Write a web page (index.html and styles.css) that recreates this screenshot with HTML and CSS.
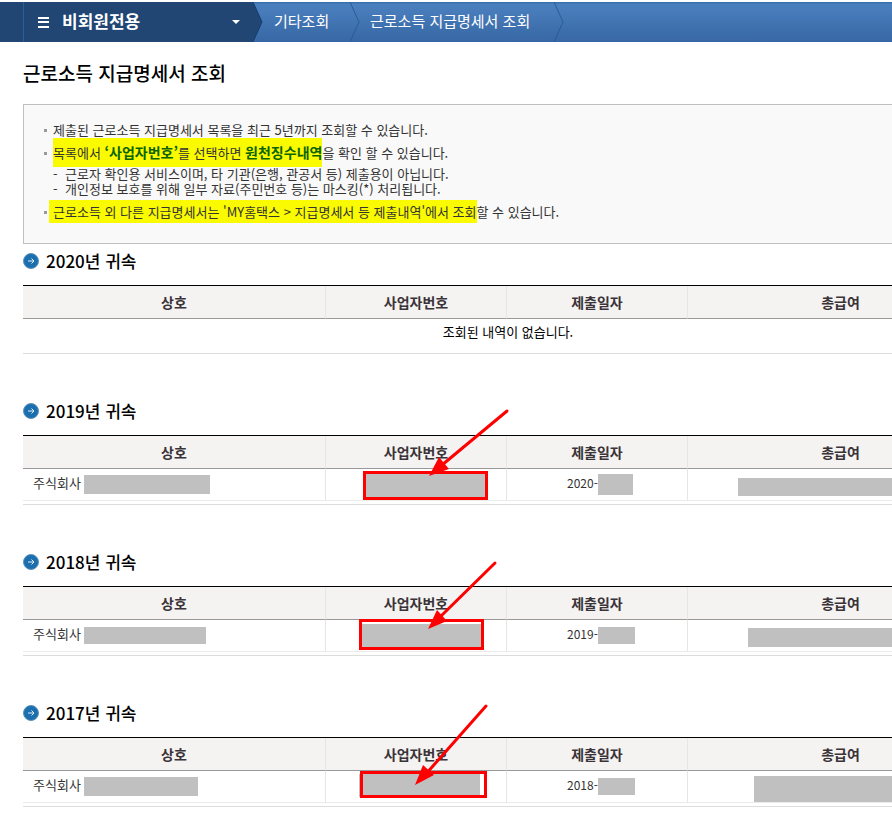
FILE: index.html
```html
<!DOCTYPE html>
<html lang="ko">
<head>
<meta charset="utf-8">
<meta name="viewport" content="width=device-width, initial-scale=1">
<title>근로소득 지급명세서 조회</title>
<link rel="stylesheet" href="styles.css">
</head>
<body>
<nav class="topbar">
  <button class="menu" type="button">
    <svg class="menu-bars" width="11" height="11" viewBox="0 0 11 11" aria-hidden="true"><path d="M0 0h11v2H0zM0 4h11v2H0zM0 9h11v2H0z" fill="#fff"/></svg>
    <span class="menu-label">비회원전용</span>
    <svg class="menu-caret" width="8" height="4" viewBox="0 0 8 4" aria-hidden="true"><path d="M0 0h8L4 4z" fill="#fff"/></svg>
  </button>
  <svg class="chevron" width="10" height="40" viewBox="0 0 10 40" aria-hidden="true"><path d="M0 0L9 20L0 40z" fill="#214674"/><path d="M0 0L9 20L0 40" fill="none" stroke="#123f6e"/></svg>
  <a class="crumb crumb-group" href="#">기타조회</a>
  <svg class="chevron" width="10" height="40" viewBox="0 0 10 40" aria-hidden="true"><path d="M0 0L9 20L0 40" fill="none" stroke="#255e96"/></svg>
  <a class="crumb crumb-page" href="#">근로소득 지급명세서 조회</a>
  <svg class="chevron" width="10" height="40" viewBox="0 0 10 40" aria-hidden="true"><path d="M0 0L9 20L0 40" fill="none" stroke="#255e96"/></svg>
</nav>

<main class="content">
  <h1 class="title">근로소득 지급명세서 조회</h1>

  <ul class="notice">
    <li>제출된 근로소득 지급명세서 목록을 최근 5년까지 조회할 수 있습니다.</li>
    <li><mark class="hl hl-tall">목록에서 <strong>‘사업자번호’</strong>를 선택하면 <strong>원천징수내역</strong></mark>을 확인 할 수 있습니다.
      <ul class="sub">
        <li>근로자 확인용 서비스이며, 타 기관(은행, 관공서 등) 제출용이 아닙니다.</li>
        <li>개인정보 보호를 위해 일부 자료(주민번호 등)는 마스킹(*) 처리됩니다.</li>
      </ul>
    </li>
    <li><mark class="hl hl-wide">근로소득 외 다른 지급명세서는 'MY홈택스 &gt; 지급명세서 등 제출내역'에서 조회</mark>할 수 있습니다.</li>
  </ul>

  <section class="year">
    <h2><svg width="16" height="16" viewBox="0 0 16 16" aria-hidden="true"><circle cx="8" cy="8" r="7.5" fill="#1b6fae" stroke="#5d93b8"/><path d="M5 8h6M8.500 5.500L11 8L8.500 10.500" fill="none" stroke="#e4eff7"/></svg>2020년 귀속</h2>
    <div class="grid grid-empty">
      <table>
        <colgroup><col class="c-name"><col class="c-num"><col class="c-date"><col></colgroup>
        <thead><tr><th>상호</th><th>사업자번호</th><th>제출일자</th><th>총급여</th></tr></thead>
        <tbody><tr><td class="empty" colspan="4">조회된 내역이 없습니다.</td></tr></tbody>
      </table>
    </div>
  </section>

  <section class="year">
    <h2><svg width="16" height="16" viewBox="0 0 16 16" aria-hidden="true"><circle cx="8" cy="8" r="7.5" fill="#1b6fae" stroke="#5d93b8"/><path d="M5 8h6M8.500 5.500L11 8L8.500 10.500" fill="none" stroke="#e4eff7"/></svg>2019년 귀속</h2>
    <div class="grid">
      <table>
        <colgroup><col class="c-name"><col class="c-num"><col class="c-date"><col></colgroup>
        <thead><tr><th>상호</th><th>사업자번호</th><th>제출일자</th><th>총급여</th></tr></thead>
        <tbody><tr>
          <td><div class="cell name"><span class="label">주식회사</span><span class="mask name-2019"></span></div></td>
          <td class="num"><svg class="note" width="181" height="102" viewBox="0 0 181 102" aria-hidden="true"><rect x="40" y="75" width="121" height="23" fill="#c0c0c0"/><rect x="38.500" y="73.500" width="122" height="26" fill="none" stroke="#f00" stroke-width="3"/><path d="M181 12L116 66" stroke="#f00" stroke-width="3" stroke-linecap="round"/><path d="M103 77L113 58L123 70z" fill="#f00"/></svg></td>
          <td><div class="cell date"><span class="label">2020-</span><span class="mask date-2019"></span></div></td>
          <td><div class="cell total"><span class="mask total-2019"></span></div></td>
        </tr></tbody>
      </table>
    </div>
  </section>

  <section class="year">
    <h2><svg width="16" height="16" viewBox="0 0 16 16" aria-hidden="true"><circle cx="8" cy="8" r="7.5" fill="#1b6fae" stroke="#5d93b8"/><path d="M5 8h6M8.500 5.500L11 8L8.500 10.500" fill="none" stroke="#e4eff7"/></svg>2018년 귀속</h2>
    <div class="grid">
      <table>
        <colgroup><col class="c-name"><col class="c-num"><col class="c-date"><col></colgroup>
        <thead><tr><th>상호</th><th>사업자번호</th><th>제출일자</th><th>총급여</th></tr></thead>
        <tbody><tr>
          <td><div class="cell name"><span class="label">주식회사</span><span class="mask name-2018"></span></div></td>
          <td class="num"><svg class="note" width="181" height="102" viewBox="0 0 181 102" aria-hidden="true"><rect x="36" y="74" width="120" height="23" fill="#c0c0c0"/><rect x="34.500" y="70.500" width="122" height="28" fill="none" stroke="#f00" stroke-width="3"/><path d="M169 13L114 67" stroke="#f00" stroke-width="3" stroke-linecap="round"/><path d="M102 79L111 60L121 71z" fill="#f00"/></svg></td>
          <td><div class="cell date"><span class="label">2019-</span><span class="mask date-2018"></span></div></td>
          <td><div class="cell total"><span class="mask total-2018"></span></div></td>
        </tr></tbody>
      </table>
    </div>
  </section>

  <section class="year">
    <h2><svg width="16" height="16" viewBox="0 0 16 16" aria-hidden="true"><circle cx="8" cy="8" r="7.5" fill="#1b6fae" stroke="#5d93b8"/><path d="M5 8h6M8.500 5.500L11 8L8.500 10.500" fill="none" stroke="#e4eff7"/></svg>2017년 귀속</h2>
    <div class="grid">
      <table>
        <colgroup><col class="c-name"><col class="c-num"><col class="c-date"><col></colgroup>
        <thead><tr><th>상호</th><th>사업자번호</th><th>제출일자</th><th>총급여</th></tr></thead>
        <tbody><tr>
          <td><div class="cell name"><span class="label">주식회사</span><span class="mask name-2017"></span></div></td>
          <td class="num"><svg class="note" width="181" height="102" viewBox="0 0 181 102" aria-hidden="true"><rect x="33" y="73" width="121" height="23" fill="#c0c0c0"/><rect x="35.500" y="71.500" width="124" height="24" fill="none" stroke="#f00" stroke-width="3"/><path d="M160 5L99 74" stroke="#f00" stroke-width="3" stroke-linecap="round"/><path d="M89 84L97 64L108 74z" fill="#f00"/></svg></td>
          <td><div class="cell date"><span class="label">2018-</span><span class="mask date-2017"></span></div></td>
          <td><div class="cell total"><span class="mask total-2017"></span></div></td>
        </tr></tbody>
      </table>
    </div>
  </section>
</main>
</body>
</html>
```
FILE: styles.css
```css
* { box-sizing: border-box; }

body {
  margin: 0;
  padding-top: 2px;
  background: #fff;
  color: #333;
  font: 13px/15px "Noto Sans CJK KR", "Noto Sans", sans-serif;
}

ul { margin: 0; padding: 0; list-style: none; }

.topbar {
  display: flex;
  height: 40px;
  overflow: hidden;
  background: linear-gradient(#3a70ad 0, #3a70ad 1px, #4b80be 2px, #3867a5 100%);
}

.menu {
  display: flex;
  flex: none;
  align-items: center;
  width: 253px;
  padding: 0 13px 0 38px;
  border: 0;
  background: linear-gradient(to right, transparent 23px, #2c5f96 23px, #2c5f96 24px, transparent 24px) #214674;
  color: #fff;
  font: bold 17px/20px "Noto Sans CJK KR", sans-serif;
}

.menu-label { margin-left: 13px; padding-bottom: 2px; }
.menu-caret { margin-left: auto; }
.chevron { flex: none; }

.crumb {
  flex: none;
  color: #fff;
  font-size: 15px;
  line-height: 37px;
  text-decoration: none;
  white-space: nowrap;
}

.crumb-group { width: 87px; padding-left: 11px; }
.crumb-page { width: 194px; padding-left: 10px; }

.content { padding-left: 23px; overflow: hidden; }

.title {
  margin: 0;
  color: #000;
  font-size: 19px;
  font-weight: 500;
  line-height: 62px;
}

.notice {
  min-width: 970px;
  padding: 17px 20px 24px;
  border: 1px solid #c0c0c0;
  background: #f9f9f9;
}

.notice > li {
  position: relative;
  margin-bottom: 8px;
  padding-left: 9px;
}

.notice > li:last-child { margin-bottom: 0; }

.notice > li::before {
  content: "";
  position: absolute;
  left: 0;
  top: 7px;
  width: 3px;
  height: 3px;
  background: #999;
}

.sub { padding-top: 6px; }
.sub li { display: flex; }
.sub li::before { content: "-"; width: 12px; }

.hl { background: #fafa00; color: #333; }
.hl strong { color: #0a6400; font-size: 14px; line-height: 14px; }
.hl-tall { padding: 5px 0; }
.hl-wide { margin-left: -4px; padding: 2px 0 2px 4px; }

.year { margin-bottom: 40px; }

.year h2 {
  display: flex;
  align-items: center;
  gap: 7px;
  height: 41px;
  margin: 0;
  padding-bottom: 7px;
  color: #000;
  font-size: 17px;
  font-weight: 500;
  line-height: 20px;
}

.grid {
  min-width: 970px;
  padding-bottom: 3px;
  border-top: 1px solid #000;
  border-bottom: 1px solid #dcdcdc;
}

.grid-empty { padding-bottom: 0; }

table {
  width: 100%;
  table-layout: fixed;
  border-collapse: separate;
  border-spacing: 0;
}

.c-name { width: 303px; }
.c-num, .c-date { width: 181px; }

th, td {
  padding: 0;
  border-right: 1px solid #e6e6e6;
}

th:last-child, td:last-child { border-right: 0; }

th {
  height: 33px;
  border-bottom: 1px solid #999;
  background: #f5f3f2;
  color: #3a3338;
  font-size: 14px;
  font-weight: bold;
}

td {
  height: 32px;
  border-bottom: 1px solid #ebebeb;
}

td.empty {
  height: 34px;
  padding-bottom: 9px;
  border: 0;
  color: #000;
  text-align: center;
}

.cell { display: flex; align-items: center; height: 31px; }
.label { padding-bottom: 4px; }
.name { gap: 3px; padding-left: 10px; }
.date { padding-left: 60px; font-size: 12px; }
.total { align-items: flex-end; justify-content: flex-end; padding-bottom: 4px; }
.total:has(.total-2017) { padding-bottom: 0; }

.mask { background: #c0c0c0; }
.name-2019 { width: 126px; height: 19px; }
.name-2018 { width: 122px; height: 17px; }
.name-2017 { width: 114px; height: 19px; }
.date-2019 { width: 35px; height: 21px; }
.date-2018, .date-2017 { width: 37px; height: 17px; }
.total-2019 { width: 255px; height: 18px; }
.total-2018 { width: 245px; height: 19px; }
.total-2017 { width: 239px; height: 26px; }

/* Frame and arrow laid over the number column */
.num { position: relative; }
.note {
  position: absolute;
  left: 0;
  top: -70px;
  overflow: visible;
  pointer-events: none;
}
```
